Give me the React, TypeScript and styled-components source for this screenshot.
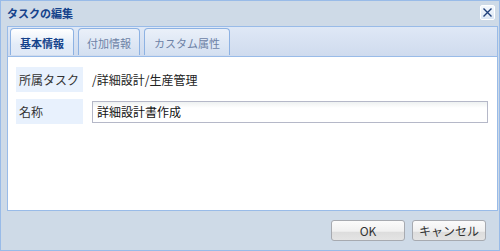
import React from "react";
import styled, { createGlobalStyle } from "styled-components";

const Global = createGlobalStyle`
  html, body { margin: 0; padding: 0; background: #ffffff; }
  * { box-sizing: border-box; }
  body { font-family: "Noto Sans CJK JP", "Noto Sans", sans-serif; }
`;

const Window = styled.div`
  width: 500px;
  height: 251px;
  border: 1px solid #99bbe8;
  background: #cedae7;
  display: flex;
  flex-direction: column;
`;

const Header = styled.div`
  height: 25px;
  display: flex;
  align-items: center;
  justify-content: space-between;
  padding: 0 4px 1px 6px;
`;

const Title = styled.div`
  font-size: 11px;
  font-weight: bold;
  color: #15428b;
  line-height: 14px;
`;

const CloseBtn = styled.div`
  width: 15px;
  height: 15px;
  border: 1px solid #ffffff;
  border-radius: 2px;
  background: linear-gradient(#f4f8fd, #dbe6f4);
  display: flex;
  align-items: center;
  justify-content: center;
  margin-top: -2px;
`;

const Content = styled.div`
  margin: 0 1px 0 6px;
  display: flex;
  flex-direction: column;
  flex: 1;
`;

const TabStrip = styled.div`
  height: 30px;
  border: 1px solid #99bbe8;
  border-bottom: none;
  background: linear-gradient(#dfe8f6, #cfdbee);
  display: flex;
  align-items: flex-end;
  gap: 4px;
  padding: 0 0 1px 2px;
`;

const Tab = styled.div<{ $active?: boolean; $w: number }>`
  width: ${(p) => p.$w}px;
  height: 27px;
  border: 1px solid #8db2e3;
  border-bottom: none;
  border-radius: 4px 4px 0 0;
  background: ${(p) =>
    p.$active
      ? "linear-gradient(#ffffff, #e3ecf8 60%, #dfe8f6)"
      : "linear-gradient(#eaf0f9, #d4e0f1)"};
  color: ${(p) => (p.$active ? "#15428b" : "#6d82a6")};
  font-weight: ${(p) => (p.$active ? "bold" : "normal")};
  font-size: 11px;
  display: flex;
  align-items: center;
  justify-content: center;
  padding-top: 1px;
`;

const Body = styled.div`
  height: 155px;
  background: #ffffff;
  border: 1px solid #99bbe8;
  padding: 10px 9px 0 8px;
  display: flex;
  flex-direction: column;
  gap: 7px;
`;

const Row = styled.div`
  display: flex;
  align-items: center;
  gap: 9px;
  height: 25px;
`;

const Label = styled.div`
  width: 67px;
  height: 25px;
  background: #e8f1fd;
  color: #333333;
  font-size: 12px;
  display: flex;
  align-items: center;
  padding-left: 3px;
`;

const Value = styled.div`
  font-size: 12px;
  color: #222222;
`;

const Input = styled.input`
  flex: 1;
  height: 22px;
  border: 1px solid #b5b8c8;
  background: linear-gradient(#eef1f1, #ffffff 6px);
  font-family: "Noto Sans CJK JP", "Noto Sans", sans-serif;
  font-size: 12px;
  color: #111111;
  padding: 0 4px;
  outline: none;
`;

const Footer = styled.div`
  flex: 1;
  display: flex;
  justify-content: flex-end;
  align-items: flex-start;
  gap: 7px;
  padding: 9px 12px 0 0;
`;

const Button = styled.button<{ $w: number }>`
  width: ${(p) => p.$w}px;
  height: 21px;
  border: 1px solid #a7aab0;
  border-radius: 3px;
  background: linear-gradient(#fbfbfb, #f0f0f0 55%, #dcdcdc 56%, #e4e4e4);
  font-family: "Noto Sans CJK JP", "Noto Sans", sans-serif;
  font-size: 12px;
  color: #333333;
  padding: 0;
  display: flex;
  align-items: center;
  justify-content: center;
`;

export default function App() {
  return (
    <>
      <Global />
      <Window>
        <Header>
          <Title>タスクの編集</Title>
          <CloseBtn>
            <svg width="11" height="11" viewBox="0 0 11 11">
              <path d="M1.5 1.5 L9.5 9.5 M9.5 1.5 L1.5 9.5" stroke="#1f3f7a" strokeWidth="1.4" />
            </svg>
          </CloseBtn>
        </Header>
        <Content>
          <TabStrip>
            <Tab $active $w={64}>基本情報</Tab>
            <Tab $w={62}>付加情報</Tab>
            <Tab $w={86}>カスタム属性</Tab>
          </TabStrip>
          <Body>
            <Row>
              <Label>所属タスク</Label>
              <Value>/詳細設計/生産管理</Value>
            </Row>
            <Row>
              <Label>名称</Label>
              <Input defaultValue="詳細設計書作成" />
            </Row>
          </Body>
          <Footer>
            <Button $w={74}>OK</Button>
            <Button $w={74}>キャンセル</Button>
          </Footer>
        </Content>
      </Window>
    </>
  );
}
